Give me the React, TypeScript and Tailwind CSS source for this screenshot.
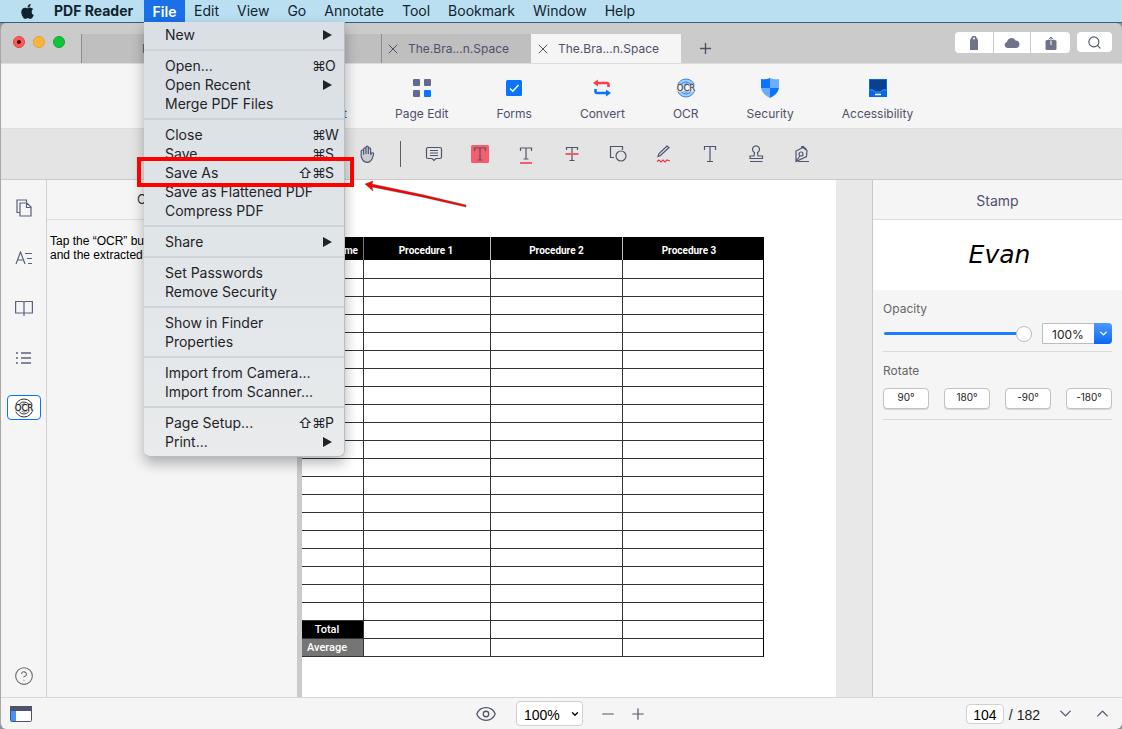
import { clsx } from 'clsx'
import { ChevronDown, ChevronUp, CircleHelp, Eye, Minus, Plus, Search, X } from 'lucide-react'
import { ReactNode, useState } from 'react'
import { FaApple } from 'react-icons/fa'

type MenuEntry = {
  label: string
  shift?: boolean
  shortcut?: string
  submenu?: boolean
  marked?: boolean
}

const fileMenu: MenuEntry[][] = [
  [{ label: 'New', submenu: true }],
  [
    { label: 'Open...', shortcut: 'O' },
    { label: 'Open Recent', submenu: true },
    { label: 'Merge PDF Files' },
  ],
  [
    { label: 'Close', shortcut: 'W' },
    { label: 'Save...', shortcut: 'S' },
    { label: 'Save As', shift: true, shortcut: 'S', marked: true },
    { label: 'Save as Flattened PDF' },
    { label: 'Compress PDF' },
  ],
  [{ label: 'Share', submenu: true }],
  [{ label: 'Set Passwords' }, { label: 'Remove Security' }],
  [{ label: 'Show in Finder' }, { label: 'Properties' }],
  [{ label: 'Import from Camera...' }, { label: 'Import from Scanner...' }],
  [
    { label: 'Page Setup...', shift: true, shortcut: 'P' },
    { label: 'Print...', submenu: true },
  ],
]

const menus = ['Edit', 'View', 'Go', 'Annotate', 'Tool', 'Bookmark', 'Window', 'Help']

const SaveAsPointer = () => (
  <>
    <span className="pointer-events-none absolute -top-[6px] -left-[7px] z-10 h-[30px] w-[217px] border-4 border-[#ff0000]" />
    <svg
      className="pointer-events-none absolute top-[14px] left-[220px] z-10"
      width="104"
      height="32"
      viewBox="0 0 104 32"
    >
      <path
        d="M1 7 L9 4 L8 7 L60 18 L102 28 L102 30 L58 20 L8 10 L9 14 Z"
        fill="#f00"
        stroke="#444"
        strokeWidth=".4"
      />
    </svg>
  </>
)

const FileMenu = () => (
  <div className="absolute top-full left-0 z-20 w-[201px] rounded-b-md border-r border-b border-[#b9bdc0] bg-linear-to-b from-[#dadfe5] via-[#e0e5e8] to-[#e9ebec] pt-[3px] pb-[5px] font-normal text-[#1f2429] shadow-[0_6px_14px_rgba(0,0,0,0.3)]">
    {fileMenu.map((group, i) => (
      <div key={group[0].label}>
        {i > 0 && <hr className="my-[5px] h-[2px] border-0 bg-[#d0d4d8]" />}
        <ul>
          {group.map((item) => (
            <li key={item.label} className="relative">
              <button className="flex h-[19px] w-full items-center justify-between pl-[21px] text-left">
                <span>{item.label}</span>
                {item.submenu && (
                  <svg className="mr-3" width="10" height="10" viewBox="0 0 10 10">
                    <path d="M1 0 L10 5 L1 10 Z" fill="currentColor" />
                  </svg>
                )}
                {item.shortcut && (
                  <span className="flex w-[46px]">
                    <span className="w-[14px]">{item.shift && '⇧'}</span>
                    <span className="w-[13px]">⌘</span>
                    <span>{item.shortcut}</span>
                  </span>
                )}
              </button>
              {item.marked && <SaveAsPointer />}
            </li>
          ))}
        </ul>
      </div>
    ))}
  </div>
)

const MenuBar = () => (
  <nav className="flex h-[23px] items-stretch border-b border-[#34607f] bg-[#badff0] text-sm text-[#10242f]">
    <button aria-label="Apple" className="flex w-[54px] items-center justify-center">
      <FaApple size={17} />
    </button>
    <button className="w-[90px] text-left font-bold">PDF Reader</button>
    <div className="relative flex">
      <button className="-mb-px w-[41px] bg-[#1a70e8] font-semibold text-white">File</button>
      <FileMenu />
    </div>
    {menus.map((menu) => (
      <button key={menu} className="px-[9px]">
        {menu}
      </button>
    ))}
  </nav>
)

const tabs = ['Notes', 'The.Bra...n.Space', 'The.Bra...n.Space']

const TitleBar = () => (
  <header className="flex h-[41px] items-start border-b border-[#dcdcdc] bg-[#cbcbcb] text-xs text-[#50506a]">
    <div className="flex w-[80px] gap-2 pt-[13px] pl-3">
      <button
        aria-label="Close window"
        className="flex size-3 items-center justify-center rounded-full border border-[#e2463f] bg-[#fc5b57]"
      >
        <span className="size-1 rounded-full bg-[#4d0000]" />
      </button>
      <button aria-label="Minimise" className="size-3 rounded-full border border-[#e0a02c] bg-[#fdb43b]" />
      <button aria-label="Zoom" className="size-3 rounded-full border border-[#0eaa2c] bg-[#10c43c]" />
    </div>
    <div className="flex self-end">
      <button className="h-[29px] w-[150px] border-l border-[#8b8b8b] bg-[#bfbfbf] pl-[60px] text-left">
        Home
      </button>
      {tabs.map((tab, i) => (
        <div
          key={i}
          className={clsx(
            'flex h-[29px] w-[150px] items-center border-l',
            i === 2 ? 'border-[#f5f5f5] bg-[#f5f5f5]' : 'border-[#8b8b8b] bg-[#bfbfbf]'
          )}
        >
          <button aria-label="Close tab" className="ml-[3px]">
            <X size={16} strokeWidth={1.5} />
          </button>
          <button className="ml-[7px]">{tab}</button>
        </div>
      ))}
      <button aria-label="New tab" className="ml-4">
        <Plus size={17} strokeWidth={2} />
      </button>
    </div>
    <div className="mt-[9px] mr-[10px] ml-auto flex gap-[7px] text-[#6f7389]">
      <div className="flex gap-px">
        <button aria-label="Tag" className="flex h-[21px] w-[38px] items-center justify-center rounded-l bg-white">
          <svg width="10" height="14" viewBox="0 0 10 14" fill="currentColor">
            <path fillRule="evenodd" d="M1 14V4l2.500-4h3L9 4v10H1Zm4-12.500a1 1 0 1 0 0 2 1 1 0 0 0 0-2Z" />
          </svg>
        </button>
        <button aria-label="Cloud" className="flex h-[21px] w-9 items-center justify-center bg-white">
          <svg width="16" height="11" viewBox="0 0 16 11" fill="currentColor">
            <path d="M3.500 11a3 3 0 0 1-.6-5.900A4.600 4.600 0 0 1 11.500 3.500 3.800 3.800 0 0 1 12.500 11Z" />
          </svg>
        </button>
        <button aria-label="Share" className="flex h-[21px] w-[39px] items-center justify-center rounded-r bg-white">
          <svg width="12" height="14" viewBox="0 0 12 14">
            <rect x=".5" y="4" width="11" height="10" rx="1.500" fill="currentColor" />
            <path d="M6 4.500V9" stroke="#fff" />
            <path d="M3.500 3.500L6 1l2.500 2.500M6 1v3" fill="none" stroke="currentColor" />
          </svg>
        </button>
      </div>
      <button
        aria-label="Search"
        className="flex h-5 w-[35px] items-center justify-center rounded bg-white text-[#50556f]"
      >
        <Search size={15} strokeWidth={1.8} />
      </button>
    </div>
  </header>
)

const OcrIcon = ({ ring, fill, band, ink }: { ring: string; fill: string; band: string; ink: string }) => (
  <svg width="22" height="20" viewBox="0 0 22 20">
    <g fill="none" stroke={ring}>
      <circle cx="11" cy="10" r="9" fill={fill} />
      <circle cx="11" cy="10" r="6" />
      <circle cx="11" cy="10" r="4" />
    </g>
    <rect x="0" y="6.500" width="22" height="7" fill={band} />
    <text
      x="11"
      y="13"
      textAnchor="middle"
      fill={ink}
      fontSize="8.500"
      stroke={ink}
      strokeWidth=".3"
      fontFamily="DejaVu Sans, sans-serif"
    >
      OCR
    </text>
  </svg>
)

const tools: { label: string; icon: ReactNode }[] = [
  {
    label: 'Comment',
    icon: (
      <svg width="20" height="20" viewBox="0 0 20 20" fill="none" stroke="#5b5f80" strokeWidth="2">
        <path d="M1 2h18v13h-7l-3 3v-3H1Z" />
      </svg>
    ),
  },
  {
    label: 'Page Edit',
    icon: (
      <svg width="18" height="18" viewBox="0 0 18 18" fill="#666a8a">
        <rect width="7" height="7" rx="1" />
        <rect x="11" width="7" height="7" rx="1" />
        <rect y="11" width="7" height="7" rx="1" />
        <rect x="11" y="11" width="7" height="7" rx="1" fill="#0a74ff" />
      </svg>
    ),
  },
  {
    label: 'Forms',
    icon: (
      <svg width="16" height="16" viewBox="0 0 16 16">
        <rect width="16" height="16" rx="1.500" fill="#0a74ff" />
        <path d="M4 8.500l2.800 2.800L12.500 5" fill="none" stroke="#fff" strokeWidth="1.400" />
      </svg>
    ),
  },
  {
    label: 'Convert',
    icon: (
      <svg width="20" height="18" viewBox="0 0 20 18" fill="none" strokeWidth="2.600">
        <path d="M5 4h10q1.500 0 1.500 1.500V8" stroke="#fb3f4b" />
        <path d="M6 .5v7L1 4Z" fill="#fb3f4b" />
        <path d="M3.500 10v2.500Q3.500 14 5 14h10" stroke="#0a74ff" />
        <path d="M14 10.500v7l5-3.500Z" fill="#0a74ff" />
      </svg>
    ),
  },
  { label: 'OCR', icon: <OcrIcon ring="#2b86e8" fill="#a9cdf5" band="#f5f5f5" ink="#4a4e68" /> },
  {
    label: 'Security',
    icon: (
      <svg width="18" height="20" viewBox="0 0 18 20">
        <path d="M0 1q5 1 9-1v10H0Z" fill="#0a74ff" />
        <path d="M9 0q4 2 9 1v9H9Z" fill="#6aadff" />
        <path d="M0 10h9v10Q1 16 0 10Z" fill="#6aadff" />
        <path d="M18 10H9v10Q17 16 18 10Z" fill="#0a74ff" />
      </svg>
    ),
  },
  {
    label: 'Accessibility',
    icon: (
      <svg width="18" height="18" viewBox="0 0 18 18">
        <rect width="18" height="18" fill="#0668e6" />
        <path d="M1 1h16v9.500h-3.500l-2 2h-5l-2-2H1Z" fill="#07418f" />
        <path d="M0 11h4.300l2 2h5.400l2-2H18" fill="none" stroke="#2e93ff" />
        <path d="M6 15.500h6" stroke="#fff" strokeWidth="1.400" />
      </svg>
    ),
  },
]

const ToolBar = () => (
  <div className="flex h-[65px] gap-12 border-b border-[#dedede] bg-[#f5f5f5] pl-[291px] text-xs text-[#50506a]">
    {tools.map(({ label, icon }) => (
      <button key={label} className="flex flex-col items-center gap-1 pt-[14px]">
        <span className="flex h-5 items-center">{icon}</span>
        <span className="pt-1">{label}</span>
      </button>
    ))}
  </div>
)

const annotations: { label: string; icon: ReactNode }[] = [
  {
    label: 'Note',
    icon: (
      <>
        <path d="M4 3.500h12q1.500 0 1.500 1.500v8q0 1.500-1.500 1.500h-4l-2 2-2-2H4q-1.500 0-1.500-1.500V5q0-1.500 1.500-1.500Z" />
        <path d="M6 6.500h8M6 9h8M6 11.500h8" />
      </>
    ),
  },
  {
    label: 'Highlight',
    icon: (
      <>
        <rect x="1" y="1" width="18" height="18" rx="1.500" fill="#f95d6b" stroke="none" />
        <path d="M4.500 7V4h11v3M10 4v12M7.500 16h5" />
      </>
    ),
  },
  {
    label: 'Underline',
    icon: (
      <>
        <path d="M4.500 7V4h11v3M10 4v11M7.500 15h5" />
        <path d="M4 19h12" stroke="#f95d6b" strokeWidth="2" />
      </>
    ),
  },
  {
    label: 'Strikethrough',
    icon: (
      <>
        <path d="M4.500 6V3.500h11V6M10 3.500v13M7.500 16.500h5" />
        <path d="M3.500 10h13" stroke="#f95d6b" strokeWidth="2" />
      </>
    ),
  },
  {
    label: 'Shape',
    icon: (
      <>
        <path d="M6 13.500H2.500v-11h12V6" />
        <circle cx="13" cy="12" r="5" />
      </>
    ),
  },
  {
    label: 'Pencil',
    icon: (
      <>
        <path d="M4 12.500l1-3L13 2l2 1.500-8.500 8Z" />
        <path d="M3 17.500l2-1.500 2 2 2-2 2 2 2-2 3 1" stroke="#f03344" />
      </>
    ),
  },
  {
    label: 'Text',
    icon: <path d="M4.500 6V2.500h11V6M10 2.500v15M7 17.500h6" />,
  },
  {
    label: 'Stamp',
    icon: (
      <>
        <path d="M4 14.500V12h4l.5-3.500a3.500 3.500 0 1 1 3 0L12 12h4.500v2.500Z" />
        <path d="M4 17.500h12.500" />
      </>
    ),
  },
  {
    label: 'Signature',
    icon: (
      <>
        <path d="M4 17.500V7l7-3.500 4 3-.5 6-10.500 5ZM9 3l2-.5 3.500 3M4 17l4-5" />
        <circle cx="9" cy="10" r="2" />
        <path d="M6 17.500h11" />
      </>
    ),
  },
]

const AnnotationBar = () => (
  <div className="flex h-[51px] items-center border-b border-[#cbcbcb] bg-[#e4e4e4] pl-[343px] text-[#50556f]">
    <button aria-label="Pan" className="flex w-[46px] justify-center">
      <svg width="20" height="20" viewBox="0 0 24 24" fill="#c9cbd5" stroke="currentColor" strokeWidth="1.400">
        <path d="M8 13V6a1.400 1.400 0 0 1 2.800 0V4a1.400 1.400 0 0 1 2.800 0v2a1.400 1.400 0 0 1 2.800 0v7l1-2a1.500 1.500 0 0 1 2.600 1.200L18 18q-2 4-6 4-5 0-7-7V9a1.400 1.400 0 0 1 3-.5M10.800 5v7M13.600 5v7" />
      </svg>
    </button>
    <span className="mx-[10px] h-[26px] w-px bg-[#5c5c66]" />
    {annotations.map(({ label, icon }) => (
      <button key={label} aria-label={label} className="flex w-[46px] justify-center">
        <svg width="20" height="20" viewBox="0 0 20 20" fill="none" stroke="currentColor" strokeWidth="1.200">
          {icon}
        </svg>
      </button>
    ))}
  </div>
)

const SideRail = () => (
  <aside className="flex w-[46px] shrink-0 flex-col items-center border-r border-[#cfcfcf] bg-[#f5f5f5] pt-[9px] pb-[11px] text-[#5b6080]">
    <button aria-label="Pages" className="flex h-[50px] items-center pb-3">
      <svg width="16" height="18" viewBox="0 0 16 18" fill="none" stroke="currentColor" strokeWidth="1.200">
        <path d="M4 13.500H1V1h9.500v2.500" />
        <path d="M4 4h7l4 4v9H4ZM10.500 4v4.500H15" />
      </svg>
    </button>
    <button aria-label="Text size" className="flex h-[50px] items-center pb-3">
      <svg width="18" height="14" viewBox="0 0 18 14" fill="none" stroke="currentColor" strokeWidth="1.200">
        <path d="M1 13L5.500 1 10 13M2.500 9h6M10 2.500h7M12 7.500h5M13 12.500h4" />
      </svg>
    </button>
    <button aria-label="Bookmarks" className="flex h-[50px] items-center pb-3">
      <svg width="18" height="16" viewBox="0 0 18 16" fill="none" stroke="currentColor" strokeWidth="1.200">
        <path d="M9 3q0-1.500-1.500-1.500H.6v11.500H9h8.400V1.500h-6.900Q9 1.500 9 3v13" />
      </svg>
    </button>
    <button aria-label="Outline" className="flex h-[50px] items-center pb-3">
      <svg width="16" height="12" viewBox="0 0 16 12" stroke="currentColor" strokeWidth="1.300">
        <path d="M0 1h2M5 1h10M0 6h2M5 6h10M0 11h2M5 11h10" />
      </svg>
    </button>
    <button
      aria-label="OCR"
      className="mt-[6px] flex h-[25px] w-[34px] items-center justify-center rounded border border-[#0a74ff] bg-white"
    >
      <OcrIcon ring="#333" fill="#fff" band="#fff" ink="#222" />
    </button>
    <button aria-label="Help" className="mt-auto text-[#6b6b6b]">
      <CircleHelp size={20} strokeWidth={1.3} />
    </button>
  </aside>
)

const OcrPanel = () => (
  <section className="w-[250px] shrink-0 bg-[#f5f5f5]">
    <h2 className="h-10 border-b border-[#dedede] pl-[90px] text-[13px] leading-[39px] text-[#333]">
      OCR
    </h2>
    <p className="px-[3px] pt-[14px] font-['Liberation_Sans',sans-serif] text-xs leading-[14px] text-black">
      Tap the “OCR” button
      <br />
      and the extracted
    </p>
  </section>
)

const Page = () => (
  <main className="min-w-0 flex-1 overflow-hidden bg-white pt-[57px] pb-10">
    <table className="w-[462px] table-fixed border-separate border-spacing-0 border-r border-black text-center font-['Roboto',sans-serif]">
      <thead>
        <tr className="h-[23px] bg-black text-[10px] leading-4 text-white">
          <th className="w-[62px] border-r border-[#777] p-0 pt-1 pr-[5px] text-right">Name</th>
          <th className="w-[127px] border-r border-[#bbb] p-0 pt-1 pr-[2px]">Procedure 1</th>
          <th className="w-[132px] border-r border-[#bbb] p-0 pt-1">Procedure 2</th>
          <th className="p-0 pt-1 pr-2">Procedure 3</th>
        </tr>
      </thead>
      <tbody className="text-[11px] leading-4">
        {Array.from({ length: 22 }, (_, row) => (
          <tr key={row} className={row === 0 ? 'h-[19px]' : 'h-[18px]'}>
            <th
              className={clsx(
                'border-r border-b border-[#333] p-0 pr-[11px] font-medium text-white',
                row === 20 && 'bg-black',
                row === 21 && 'bg-[#757575]'
              )}
            >
              {row === 20 && 'Total'}
              {row === 21 && 'Average'}
            </th>
            <td className="border-r border-b border-[#333] p-0" />
            <td className="border-r border-b border-[#333] p-0" />
            <td className="border-b border-[#333] p-0" />
          </tr>
        ))}
      </tbody>
    </table>
  </main>
)

const StampPanel = () => {
  const [opacity, setOpacity] = useState(100)

  return (
    <aside className="w-[250px] shrink-0 border-l border-[#c8c8c8] bg-[#f5f5f5]">
      <h2 className="h-10 border-b border-[#dcdcdc] text-center text-sm leading-[42px] text-[#50506a]">
        Stamp
      </h2>
      <div className="flex h-[70px] items-center justify-center bg-white pl-1 font-['DejaVu_Sans',cursive] text-[25px] text-black italic">
        Evan
      </div>
      <div className="px-[10px] text-xs text-[#666]">
        <div className="border-b border-[#dadada] pt-[11px] pb-[7px]">
          <label htmlFor="opacity">Opacity</label>
          <div className="mt-[6px] flex items-center justify-between">
            <input
              id="opacity"
              type="range"
              value={opacity}
              onChange={(e) => setOpacity(Number(e.target.value))}
              className="ml-px h-[3px] w-[148px] appearance-none rounded bg-[#1c7dff] [&::-webkit-slider-thumb]:size-4 [&::-webkit-slider-thumb]:appearance-none [&::-webkit-slider-thumb]:rounded-full [&::-webkit-slider-thumb]:border [&::-webkit-slider-thumb]:border-[#bdbdbd] [&::-webkit-slider-thumb]:bg-white"
            />
            <div className="relative">
              <select
                aria-label="Opacity value"
                className="h-[21px] w-[70px] appearance-none rounded-r border border-[#bdbdbd] bg-white pt-[3px] pl-[9px] text-xs text-[#222]"
              >
                <option>100%</option>
              </select>
              <span className="pointer-events-none absolute inset-y-0 right-0 flex w-[18px] items-center justify-center rounded-r bg-linear-to-b from-[#4b99fb] to-[#0566f5] text-white">
                <ChevronDown size={11} strokeWidth={3} />
              </span>
            </div>
          </div>
        </div>
        <div className="border-b border-[#dadada] pt-[11px] pb-[10px]">
          <h3>Rotate</h3>
          <div className="mt-[9px] flex justify-between text-[10px] text-[#222]">
            {['90°', '180°', '-90°', '-180°'].map((angle) => (
              <button
                key={angle}
                className="h-[21px] w-[46px] rounded border border-[#c2c2c2] bg-white pb-[2px] shadow-[0_1px_0_rgba(0,0,0,0.12)]"
              >
                {angle}
              </button>
            ))}
          </div>
        </div>
      </div>
    </aside>
  )
}

const StatusBar = () => (
  <footer className="flex h-8 items-center border-t border-[#d6d6d6] bg-[#f5f5f5] font-['Liberation_Sans',sans-serif] text-[#50556f]">
    <div className="flex flex-1 pl-[9px]">
      <button aria-label="Toggle sidebar">
        <svg width="22" height="16" viewBox="0 0 22 16">
          <rect x=".5" y=".5" width="21" height="15" rx="1" fill="#fff" stroke="#4e5270" />
          <path d="M0 0h22v5H0Z" fill="#4e5270" />
          <path d="M1 5h5v10H1Z" fill="#4294fb" />
        </svg>
      </button>
    </div>
    <div className="flex items-center">
      <button aria-label="Preview">
        <Eye size={22} strokeWidth={1.4} />
      </button>
      <div className="relative ml-[19px] text-black">
        <select
          aria-label="Page zoom"
          className="h-[25px] w-[67px] appearance-none rounded-sm border border-[#cfcfcf] bg-white pt-[3px] pl-[7px] text-sm"
        >
          <option>100%</option>
        </select>
        <ChevronDown size={10} strokeWidth={3} className="pointer-events-none absolute top-2 right-[3px]" />
      </div>
      <button aria-label="Zoom out" className="ml-4">
        <Minus size={18} strokeWidth={1.6} />
      </button>
      <button aria-label="Zoom in" className="ml-3">
        <Plus size={18} strokeWidth={1.6} />
      </button>
    </div>
    <div className="flex flex-1 items-center justify-end pr-[10px] text-sm">
      <input
        aria-label="Page number"
        defaultValue="104"
        className="h-5 w-[38px] rounded-sm border border-[#d0d0d0] bg-white pt-[2px] text-center text-black"
      />
      <span className="ml-[5px] pt-[2px] text-[#222]">/ 182</span>
      <button aria-label="Next page" className="ml-4">
        <ChevronDown size={19} strokeWidth={1.7} />
      </button>
      <button aria-label="Previous page" className="ml-[18px]">
        <ChevronUp size={19} strokeWidth={1.7} />
      </button>
    </div>
  </footer>
)

const App = () => (
  <div className="flex min-h-screen flex-col bg-[#8a949b] font-['Inter',sans-serif]">
    <MenuBar />
    <div className="flex flex-1 flex-col overflow-hidden rounded-md border-l border-[#a8a8a8]">
      <TitleBar />
      <ToolBar />
      <AnnotationBar />
      <div className="flex flex-1">
        <SideRail />
        <OcrPanel />
        <div className="w-[5px] shrink-0 bg-[#cacaca]" />
        <Page />
        <div className="w-9 shrink-0 bg-[#e8e8e8]" />
        <StampPanel />
      </div>
      <StatusBar />
    </div>
  </div>
)

export default App
